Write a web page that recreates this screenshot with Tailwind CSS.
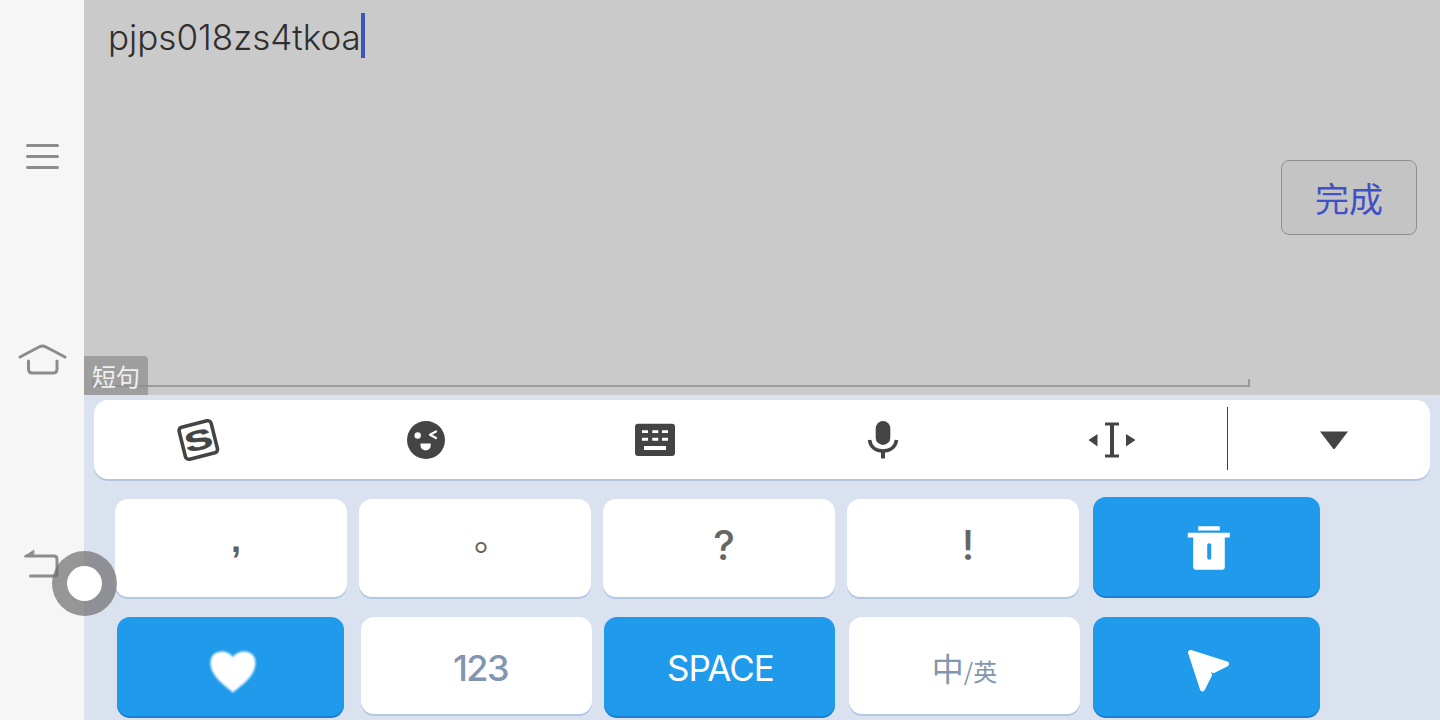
<!DOCTYPE html>
<html lang="zh-CN">
<head>
    <meta charset="UTF-8">
    <title>Input</title>
    <script src="https://cdn.jsdelivr.net/npm/@tailwindcss/browser@4"></script>
</head>
<body class="bg-[#f6f6f6] overflow-hidden">
<div class="relative flex w-[1440px] h-[720px] overflow-hidden font-['Inter','Noto_Sans_CJK_SC',sans-serif]">

    <!-- Side navigation -->
    <aside class="w-[84px] shrink-0 bg-[#f6f6f6] flex flex-col items-center pt-[133px] text-[#8c8c8c]">
        <svg class="w-[84px] h-[48px]" viewBox="0 0 84 48" fill="none" stroke="currentColor" stroke-width="3" stroke-linecap="round">
            <path d="M27.5 12.5H57.5M27.5 23.5H57.5M27.5 34.5H57.5"/>
        </svg>
        <svg class="w-[84px] h-[48px] mt-[155px]" viewBox="0 0 84 48" fill="none" stroke="currentColor" stroke-width="3" stroke-linecap="round" stroke-linejoin="round">
            <path d="M20 21 40 10.5Q42.5 9.5 45 10.5L65 21"/>
            <path d="M28.5 25V33Q28.5 37 32.5 37H53Q57 37 57 33V25"/>
        </svg>
        <svg class="w-[84px] h-[48px] mt-[157px]" viewBox="0 0 84 48" fill="none" stroke="currentColor" stroke-width="3" stroke-linecap="round" stroke-linejoin="round">
            <path d="M26 15H54Q57 15 57 18V32Q57 35 54 35H30.5"/>
            <path d="M33.5 9.5 24.5 15.5H33.5Z" fill="currentColor" stroke-width="1"/>
        </svg>
    </aside>

    <main class="flex-1 flex flex-col min-w-0">
        <!-- Edit area -->
        <section class="h-[395px] shrink-0 bg-[#cacaca] flex justify-between items-start">
            <div class="flex items-center pl-[24px] pt-[13px] h-[58px]">
                <span class="relative top-[2px] text-[35px] leading-[45px] text-[#2f2f2f] font-['Inter',sans-serif] font-light">pjps018zs4tkoa</span>
                <span class="w-[4px] h-[45px] bg-[#3d55b5]"></span>
            </div>
            <button class="mt-[160px] mr-[23px] w-[136px] h-[75px] border border-[#8f8f8f] rounded-[8px] bg-[#c4c4c4] text-[34px] leading-none text-[#3f51c4] font-['Noto_Sans_CJK_SC',sans-serif]">完成</button>
        </section>

        <!-- Keyboard -->
        <section class="flex-1 bg-[#dae2f0] pt-[5px]">
            <div class="ml-[10px] w-[1336px] h-[79px] bg-white rounded-[14px] shadow-[0_2px_0_#b3c6de] flex items-center text-[#444444]">
                <svg class="ml-[80px] w-[48px] h-[48px]" viewBox="0 0 48 48">
                    <rect x="7.8" y="7.5" width="33" height="33" rx="3.5" transform="rotate(-14 24.3 24)" fill="none" stroke="currentColor" stroke-width="3.6"/>
                    <text x="0" y="10" text-anchor="middle" transform="translate(24.3 24) rotate(-14) scale(1.5 1)" font-family="Liberation Sans" font-weight="700" font-size="28" fill="currentColor" stroke="currentColor" stroke-width="0.5">S</text>
                </svg>
                <svg class="ml-[180px] w-[48px] h-[48px]" viewBox="0 0 48 48">
                    <circle cx="24" cy="24" r="19" fill="currentColor"/>
                    <circle cx="15.7" cy="19.5" r="3.2" fill="#fff"/>
                    <path d="M34 15.5 28 18.8 34 22" fill="none" stroke="#fff" stroke-width="2.2" stroke-linecap="round" stroke-linejoin="round"/>
                    <path d="M18.5 27.5H28.7V29.5A5.1 5.1 0 0 1 18.5 29.5Z" fill="#fff"/>
                </svg>
                <svg class="ml-[181px] w-[48px] h-[48px]" viewBox="0 0 48 48">
                    <rect x="4" y="7.7" width="40" height="32.3" rx="3" fill="currentColor"/>
                    <path d="M11 14.3h6v2.6h-6zM21.3 14.3h6v2.6h-6zM31 14.3h6v2.6h-6zM11 21.7h6v3h-6zM21.3 21.7h6v3h-6zM31 21.7h6v3h-6zM13 30h22v4H13z" fill="#fff"/>
                </svg>
                <svg class="ml-[180px] w-[48px] h-[48px]" viewBox="0 0 48 48">
                    <rect x="16.7" y="5" width="14.6" height="24" rx="7.3" fill="currentColor"/>
                    <path d="M10.5 24C11.5 31 17 35 24 35S36.5 31 37.5 24" fill="none" stroke="currentColor" stroke-width="3.6"/>
                    <path d="M22 35h4v7.5h-4z" fill="currentColor"/>
                </svg>
                <svg class="ml-[181px] w-[48px] h-[48px]" viewBox="0 0 48 48" fill="currentColor">
                    <path d="M0.5 18 9.5 12V24.5ZM47.5 18 38 12V24.5Z" transform="translate(0 6)"/>
                    <path d="M17 6.5H31V9.5H26V38.5H31V41.5H17V38.5H22V9.5H17Z"/>
                </svg>
                <div class="ml-[91px] mb-[3px] w-px h-[63px] bg-[#444444]"></div>
                <svg class="ml-[82px] w-[48px] h-[48px]" viewBox="0 0 48 48" fill="currentColor">
                    <path d="M10 15.5H38L25 32.5Q24 33.5 23 32.5Z"/>
                </svg>
            </div>

            <!-- Row 1 -->
            <div class="flex items-start pl-[31px] mt-[18px]">
                <button class="mt-[2px] pl-[10px] pb-[16px] w-[232px] h-[98px] bg-white rounded-[13px] shadow-[0_2px_0_#b3c6e2] text-[36px] leading-none text-[#5f5f5f] font-bold font-['Liberation_Sans',sans-serif]">,</button>
                <button class="mt-[2px] ml-[12px] w-[232px] h-[98px] bg-white rounded-[13px] shadow-[0_2px_0_#b3c6e2] text-[36px] leading-none text-[#5f5f5f] font-['Noto_Sans_CJK_SC',sans-serif]"><span class="inline-block translate-x-[17px] -translate-y-[13px]">。</span></button>
                <button class="mt-[2px] ml-[12px] pl-[10px] pb-[6px] w-[232px] h-[98px] bg-white rounded-[13px] shadow-[0_2px_0_#b3c6e2] text-[41px] leading-none text-[#666666] font-medium">?</button>
                <button class="mt-[2px] ml-[12px] pl-[10px] pb-[6px] w-[232px] h-[98px] bg-white rounded-[13px] shadow-[0_2px_0_#b3c6e2] text-[41px] leading-none text-[#666666] font-medium">!</button>
                <button class="ml-[14px] w-[227px] h-[99px] bg-[#209aea] rounded-[13px] shadow-[0_2px_0_#1b7fd0] flex items-center justify-center">
                    <svg class="w-[48px] h-[48px] blur-[0.4px]" viewBox="0 0 48 48">
                        <path d="M15.2 3.2H36.8V7.5H15.2ZM4.8 9.8H46.8V14.5H4.8Z" fill="#fff"/>
                        <path d="M10.2 14H41.8V44Q41.8 46.8 39 46.8H13Q10.2 46.8 10.2 44Z" fill="#fff"/>
                        <rect x="24.2" y="20.2" width="4" height="16.6" rx="2" fill="#209aea"/>
                    </svg>
                </button>
            </div>

            <!-- Row 2 -->
            <div class="flex items-start pl-[33px] mt-[20px]">
                <button class="w-[227px] h-[99px] bg-[#209aea] rounded-[13px] shadow-[0_2px_0_#1b7fd0] flex items-center justify-center">
                    <svg class="w-[48px] h-[48px] overflow-visible blur-[0.8px]" viewBox="0 0 48 48">
                        <path d="M26 49.5C20 44 3.5 34 3.5 20 3.5 12 9 8.5 15 8.5 20 8.5 24 11 26 14 28 11 32 8.5 37 8.5 43 8.5 48.5 12 48.5 20 48.5 34 32 44 26 49.5Z" fill="#fff"/>
                    </svg>
                </button>
                <button class="ml-[17px] pt-[4px] pl-[8px] w-[231px] h-[97px] bg-white rounded-[13px] shadow-[0_2px_0_#b3c6e2] text-[36px] leading-none tracking-[-1.5px] font-medium text-[#8296b0]">123</button>
                <button class="ml-[12px] pt-[4px] pl-[2px] w-[231px] h-[99px] bg-[#209aea] rounded-[13px] shadow-[0_2px_0_#1b7fd0] text-[35px] leading-none tracking-[-1px] text-white">SPACE</button>
                <button class="ml-[14px] pt-[2px] w-[231px] h-[97px] bg-white rounded-[13px] shadow-[0_2px_0_#b3c6e2] text-[#8296b0] font-['Noto_Sans_CJK_SC',sans-serif] leading-none"><span class="text-[32px]">中</span><span class="text-[24px]">/英</span></button>
                <button class="ml-[13px] w-[227px] h-[99px] bg-[#209aea] rounded-[13px] shadow-[0_2px_0_#1b7fd0] flex items-center justify-center">
                    <svg class="w-[48px] h-[48px] overflow-visible blur-[0.5px]" viewBox="0 0 48 48">
                        <path d="M7.5 9.5 43.5 21 30.5 27.5 21 20 26.5 32 19.5 46Z" fill="#fff" stroke="#fff" stroke-width="5" stroke-linejoin="round"/>
                    </svg>
                </button>
            </div>
        </section>
    </main>

    <!-- Overlays: candidate bracket, phrase tab, floating ball -->
    <div class="absolute left-[92px] top-[379px] w-[1158px] h-[8px] border-b-2 border-r-2 border-l-2 border-[#9b9b9b]"></div>
    <div class="absolute left-[84px] top-[356px] w-[64px] h-[39px] bg-[#8c8c8c]/70 rounded-tr-[4px] flex items-center justify-center text-[24px] leading-none text-[#f0f0f0] font-['Noto_Sans_CJK_SC',sans-serif]">短句</div>
    <div class="absolute left-[52px] top-[551px] w-[65px] h-[65px] rounded-full border-[15px] border-[#6e6e6e]/70 bg-clip-padding bg-white"></div>
</div>
</body>
</html>
